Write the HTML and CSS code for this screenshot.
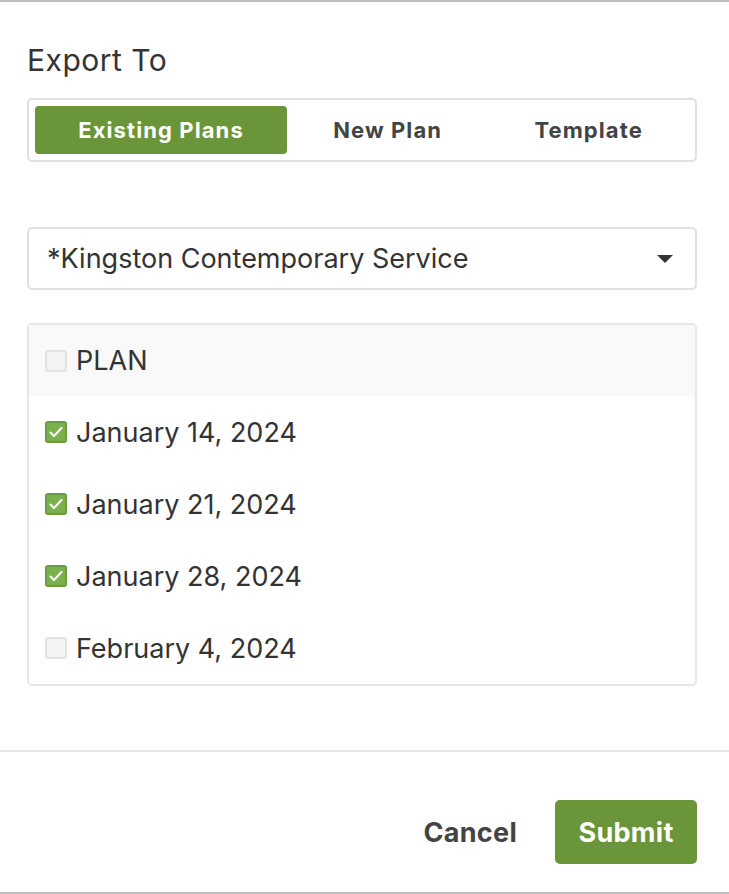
FILE: index.html
```html
<!DOCTYPE html>
<html>
<head>
<meta charset="utf-8">
<link rel="stylesheet" href="styles.css">
</head>
<body>
<div class="modal">
  <div class="body">
    <h2 class="title">Export To</h2>
    <div class="segmented">
      <div class="seg active">Existing Plans</div>
      <div class="seg">New Plan</div>
      <div class="seg">Template</div>
    </div>
    <div class="select">
      <span class="select-text">*Kingston Contemporary Service</span>
      <svg class="caret" width="16" height="8" viewBox="0 0 16 8"><path d="M0 0 H16 L8 8 Z" fill="#333"/></svg>
    </div>
    <div class="list">
      <div class="row head"><span class="cb"></span><span class="label">PLAN</span></div>
      <div class="row"><span class="cb on"><svg width="14" height="12" viewBox="0 0 14 12"><path d="M1.5 6.5 L5 10 L12.5 2" fill="none" stroke="#fff" stroke-width="2" stroke-linecap="round" stroke-linejoin="round"/></svg></span><span class="label">January 14, 2024</span></div>
      <div class="row"><span class="cb on"><svg width="14" height="12" viewBox="0 0 14 12"><path d="M1.5 6.5 L5 10 L12.5 2" fill="none" stroke="#fff" stroke-width="2" stroke-linecap="round" stroke-linejoin="round"/></svg></span><span class="label">January 21, 2024</span></div>
      <div class="row"><span class="cb on"><svg width="14" height="12" viewBox="0 0 14 12"><path d="M1.5 6.5 L5 10 L12.5 2" fill="none" stroke="#fff" stroke-width="2" stroke-linecap="round" stroke-linejoin="round"/></svg></span><span class="label">January 28, 2024</span></div>
      <div class="row"><span class="cb"></span><span class="label">February 4, 2024</span></div>
    </div>
  </div>
  <div class="footer">
    <button class="btn cancel">Cancel</button>
    <button class="btn submit">Submit</button>
  </div>
</div>
</body>
</html>
```

FILE: styles.css
```css
* { box-sizing: border-box; }
html, body { margin: 0; padding: 0; background: #fff; }
body {
  font-family: Inter, "Noto Sans", "Liberation Sans", sans-serif;
  color: #333;
}
.modal {
  height: 894px;
  border-top: 2px solid #bdbdbd;
  border-bottom: 2px solid #bdbdbd;
  display: flex;
  flex-direction: column;
}
.body {
  padding: 0 32px 0 27px;
  height: 750px;
  border-bottom: 2px solid #e6e6e6;
}
.title {
  margin: 0;
  padding-top: 40px;
  height: 96px;
  font-size: 30px;
  line-height: 36px;
  font-weight: 400;
  letter-spacing: 0.5px;
  color: #333;
}
.segmented {
  display: flex;
  border: 2px solid #e0e0e0;
  border-radius: 5px;
  padding: 6px;
  height: 64px;
}
.seg {
  flex: 1 1 auto;
  display: flex;
  align-items: center;
  justify-content: center;
  font-size: 22px;
  font-weight: 700;
  letter-spacing: 1.1px;
  color: #444;
  border-radius: 4px;
}
.seg.active {
  flex: 0 0 252px;
  background: #6a9539;
  color: #fff;
}
.select {
  margin-top: 65px;
  height: 63px;
  border: 2px solid #e0e0e0;
  border-radius: 5px;
  display: flex;
  align-items: center;
  justify-content: space-between;
  padding: 0 22px 0 18px;
}
.select-text {
  font-size: 27px;
  color: #333;
}
.list {
  margin-top: 33px;
  border: 2px solid #e6e6e6;
  border-radius: 5px;
  overflow: hidden;
}
.row {
  height: 72px;
  display: flex;
  align-items: center;
  padding-left: 16px;
}
.row.head {
  background: #f9f9f9;
  height: 71px;
}
.cb {
  width: 22px;
  height: 22px;
  border: 2px solid #e2e2e2;
  background: #f3f3f3;
  border-radius: 3px;
  display: flex;
  align-items: center;
  justify-content: center;
  margin-right: 9px;
}
.cb.on {
  background: #7caf4e;
  border-color: #6c9c40;
}
.label {
  font-size: 27px;
  color: #333;
}
.footer {
  flex: 1;
  display: flex;
  justify-content: flex-end;
  align-items: flex-start;
  padding: 48px 32px 0 0;
  gap: 38px;
}
.btn {
  font-family: inherit;
  font-size: 27px;
  font-weight: 700;
  letter-spacing: 0.3px;
  border: none;
  background: none;
  height: 64px;
  cursor: pointer;
}
.cancel { color: #444; padding: 0; }
.submit {
  background: #6a9539;
  color: #fff;
  border-radius: 5px;
  width: 142px;
  padding: 0;
}
```
